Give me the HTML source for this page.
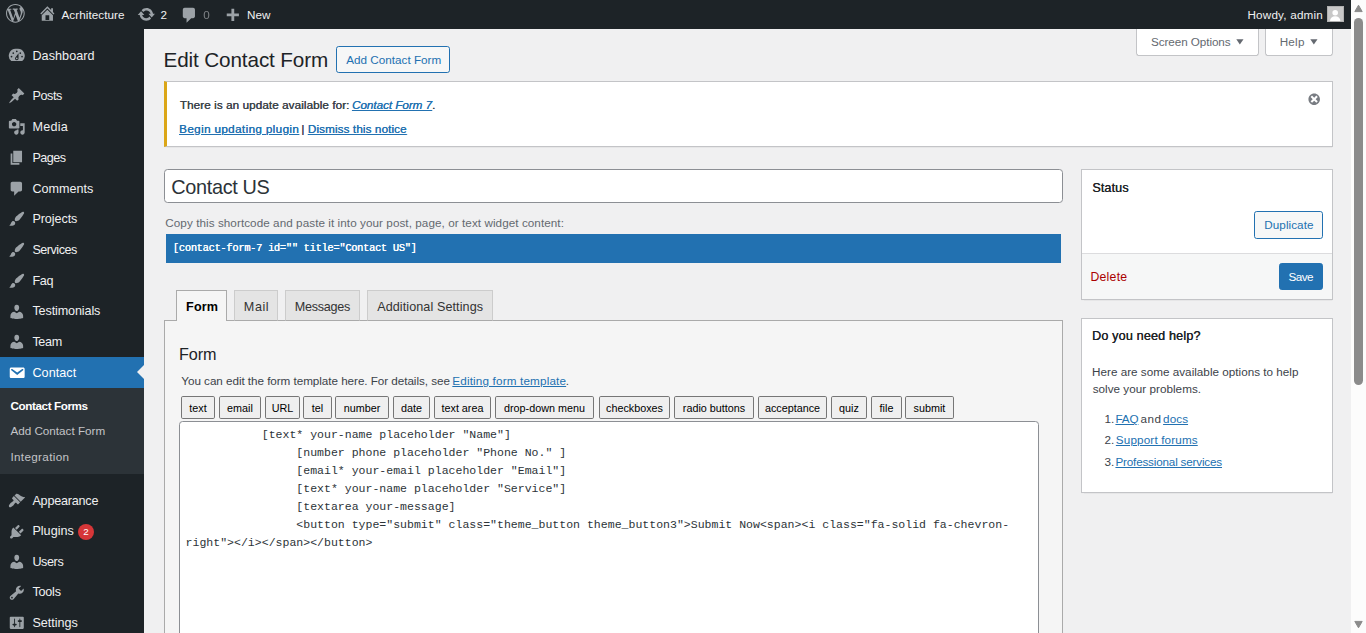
<!DOCTYPE html>
<html lang="en">
<head>
<meta charset="utf-8">
<title>Edit Contact Form ‹ Acrhitecture — WordPress</title>
<style>
*{box-sizing:border-box}
html,body{margin:0;padding:0;width:1366px;height:633px;overflow:hidden;background:#f0f0f1}
body{font-family:"Liberation Sans",Arial,sans-serif;color:#3c434a;position:relative}
#view{position:absolute;left:0;top:0;width:1351px;height:633px;overflow:hidden;background:#f0f0f1}
#z{zoom:0.9;width:1501.12px;height:703.4px;position:relative;font-size:13px;line-height:1.4}
#z>div,#z>svg,#z>pre{position:absolute}
/* scrollbar */
#sb{position:absolute;left:1351px;top:0;width:15px;height:633px;background:#fcfcfc}
#sb .th{position:absolute;left:3px;top:18px;width:9px;height:367px;border-radius:4.5px;background:#8b8b8b}
#sb svg{position:absolute;left:0;display:block;fill:#8b8b8b}
/* admin bar */
#bar{left:0;top:0;width:100%;height:32px;background:#1d2327;color:#f0f0f1;font-size:13px;line-height:32px}
#bar .it{position:absolute;top:.9px;height:32px;white-space:nowrap}
#bar svg{position:absolute;fill:#9ca2a7}
#ava{position:absolute;width:19px;height:18px;border:1px solid #b0b0b0;background:#c8c8c8;overflow:hidden}
#ava svg{position:static;display:block;width:16px;height:16px}
/* menu */
#menuback{left:0;top:32px;width:160px;bottom:0;background:#1d2327}
#menu{position:absolute;left:0;top:32.6px;width:160px;margin:0;padding:12px 0;list-style:none;font-size:14px;line-height:1.3;color:#f0f0f1}
#menu li.top{position:relative;height:34.2px;padding:8px 8px 8px 36px;white-space:nowrap}
#menu li.top svg{position:absolute;left:8.5px;top:7.3px;width:19.5px;height:19.5px;fill:#9ca2a7}
#menu li.sep{height:5px;margin:0 0 6px}
#menu li.top span.nd{position:relative;top:.7px}
#menu li.sep2{height:12.7px}
#menu li.sep2~li.top{height:33.9px}
#menu li.cur{background:#2271b1;color:#fff;margin-top:-.9px;height:35.1px;padding-top:8.9px}
#menu li.cur svg{margin-top:.9px}
#menu li.cur svg{fill:#fff}
#menu li.cur:after{content:"";position:absolute;right:0;top:50%;margin-top:-8px;border:8px solid transparent;border-right-color:#f0f0f1}
#menu ul.sub{list-style:none;margin:0;padding:5.6px 0 5px;background:#2c3338;font-size:13px;line-height:1.4;color:#c3c4c7}
#menu ul.sub li{padding:5px 11.6px;white-space:nowrap}
#menu ul.sub li.on{color:#fff;font-weight:bold}
.badge{display:inline-block;vertical-align:top;margin:.5px 0 -1px .8px;padding:0 5px;min-width:18px;height:18px;border-radius:9px;background:#d63638;color:#fff;font-size:11px;line-height:1.6;text-align:center}
/* text runs */
.tx{white-space:nowrap;line-height:1}
.tx>span{display:inline-block;vertical-align:top}
.f13{font-size:13px;margin-top:-11px}
.f14{font-size:14px;margin-top:-11.85px}
.h1{font-size:23px;margin-top:-19.47px;color:#1d2327}
.h2{font-size:18px;margin-top:-15.24px;color:#1d2327}
.ttl{font-size:22.1px;margin-top:-18.7px;color:#2c3338}
.mono10{font-family:"Liberation Mono",monospace;font-size:11.6px;letter-spacing:-.355px;margin-top:-8.89px;text-shadow:.3px 0 0 currentColor}
.sb{text-shadow:.32px 0 0 currentColor}
.lnk{color:#2271b1}
.lnk span{text-decoration:underline;text-decoration-thickness:1px;text-underline-offset:1.5px}
svg.ab{position:absolute}
/* boxes */
.tg{border:1px solid #c3c4c7;border-top:none;border-radius:0 0 4px 4px;background:#fff}
.pta{border:1px solid #2271b1;border-radius:3px;background:#f6f7f7}
.notice{background:#fff;border:1px solid #c3c4c7;border-left:4px solid #dba617;box-shadow:0 1px 1px rgba(0,0,0,.04)}
.title{background:#fff;border:1px solid #8c8f94;border-radius:4px}
.sc{background:#2271b1}
.panel{background:#f5f5f5;border:1px solid #aaa}
.tab{background:#e4e4e4;border:1px solid #ccc;border-bottom:1px solid #aaa}
.tab.act{background:#f5f5f5;border:1px solid #aaa;border-bottom:none}
.tb{background:#efefef;border:1px solid #767676;border-radius:2px;color:#000;font-size:12px;line-height:25.5px;text-align:center;white-space:nowrap}
.ta{background:#fff;border:1px solid #8c8f94;border-radius:4px}
.code{margin:0;font-family:"Liberation Mono",monospace;font-size:12.83px;line-height:20px;color:#2c3338;white-space:pre}
.pbox{background:#fff;border:1px solid #c3c4c7;box-shadow:0 1px 1px rgba(0,0,0,.04)}
</style>
</head>
<body>
<div id="view"><div id="z">
<div id="menuback"></div>
<div id="bar">
<svg style="left:6.77px;top:4.99px;width:20.8px;height:20.8px" viewBox="0 0 20 20"><path fill-rule="evenodd" d="M20 10c0-5.51-4.49-10-10-10C4.48 0 0 4.49 0 10c0 5.52 4.48 10 10 10 5.51 0 10-4.48 10-10zM7.78 15.37L4.37 6.22c.55-.02 1.17-.08 1.17-.08.5-.06.44-1.13-.06-1.11 0 0-1.45.11-2.37.11-.18 0-.37 0-.58-.01C4.12 2.69 6.87 1.11 10 1.11c2.33 0 4.45.87 6.05 2.34-.68-.11-1.65.39-1.65 1.58 0 .74.45 1.36.9 2.1.35.61.55 1.36.55 2.46 0 1.49-1.4 5-1.4 5l-3.03-8.37c.54-.02.82-.17.82-.17.5-.05.44-1.25-.06-1.22 0 0-1.44.12-2.38.12-.87 0-2.33-.12-2.33-.12-.5-.03-.56 1.2-.06 1.22l.92.08 1.26 3.41zM17.41 10c.24-.64.74-1.87.43-4.25.7 1.29 1.05 2.71 1.05 4.25 0 3.29-1.73 6.24-4.4 7.78.97-2.59 1.94-5.2 2.92-7.78zM6.1 18.09C3.12 16.65 1.11 13.53 1.11 10c0-1.3.23-2.48.72-3.59C3.25 10.3 4.67 14.2 6.1 18.09zm4.03-6.63l2.58 6.98c-.86.29-1.76.45-2.71.45-.79 0-1.57-.11-2.29-.33.81-2.38 1.62-4.74 2.42-7.1z"/></svg>
<svg style="left:41.71px;top:4.90px;width:20.8px;height:20.8px" viewBox="0 0 20 20"><path fill-rule="evenodd" d="M16 8.5l1.53 1.53-1.06 1.06L10 4.62l-6.47 6.47-1.06-1.06L10 2.5l4 4v-2h2v4zm-6-2.46l6 5.99V18H4v-5.970zM12 17v-5H8v5h4z"/></svg>
<div class="it" style="left:68.31px"><span id="t-site" style="letter-spacing:0.068px;">Acrhitecture</span></div>
<svg style="left:152.49px;top:5.16px;width:20.8px;height:20.8px" viewBox="0 0 20 20"><path fill-rule="evenodd" d="M10.2 3.28c3.53 0 6.43 2.61 6.92 6h2.08l-3.5 4-3.5-4h2.32c-.45-1.97-2.21-3.45-4.32-3.45-1.45 0-2.73.71-3.54 1.78L4.95 5.66C6.23 4.2 8.11 3.28 10.2 3.28zm-.4 13.44c-3.52 0-6.43-2.61-6.92-6H.8l3.500-4c1.170 1.330 2.330 2.670 3.500 4H5.480c.45 1.97 2.21 3.45 4.32 3.45 1.45 0 2.73-.71 3.54-1.78l1.71 1.95c-1.28 1.46-3.15 2.38-5.25 2.38z"/></svg>
<div class="it" style="left:178.22px"><span id="t-upd">2</span></div>
<svg style="left:200.29px;top:6.21px;width:20.8px;height:20.8px" viewBox="0 0 20 20"><path fill-rule="evenodd" d="M5 2h9c1.1 0 2 .9 2 2v7c0 1.1-.9 2-2 2h-2l-5 5v-5H5c-1.1 0-2-.9-2-2V4c0-1.1.9-2 2-2z"/></svg>
<div class="it" style="left:225.89px;color:#a7aaad;opacity:.7"><span id="t-cmt">0</span></div>
<svg style="left:248.30px;top:7.66px;width:20.8px;height:20.8px" viewBox="0 0 20 20"><path fill-rule="evenodd" d="M17 7v3h-5v5H9v-5H4V7h5V2h3v5h5z"/></svg>
<div class="it" style="left:274.49px"><span id="t-new" style="letter-spacing:0.021px;">New</span></div>
<div class="it" style="left:1386.04px"><span id="t-howdy" style="letter-spacing:0.225px;">Howdy, admin</span></div>
<div id="ava" style="left:1474.67px;top:6.89px"><svg viewBox="0 0 16 16"><circle cx="8" cy="6.3" r="3.1" fill="#fff"/><path fill="#fff" d="M2.2 16c0-3.6 2.4-5.6 5.8-5.6s5.800 2 5.800 5.600z"/></svg></div>
</div>
<ul id="menu">
<li class="top"><svg viewBox="0 0 20 20"><path fill-rule="evenodd" d="M3.76 16h12.48A7.998 7.998 0 0010 2a7.998 7.998 0 00-6.24 14zM10 4c.55 0 1 .45 1 1s-.45 1-1 1-1-.45-1-1 .45-1 1-1zM6 6c.55 0 1 .45 1 1s-.45 1-1 1-1-.45-1-1 .45-1 1-1zm8 0c.55 0 1 .45 1 1s-.45 1-1 1-1-.45-1-1 .45-1 1-1zm-5.370 5.550L12 7v6c0 1.100-.9 2-2 2s-2-.9-2-2c0-.57.24-1.08.63-1.45zM4 10c.55 0 1 .45 1 1s-.45 1-1 1-1-.45-1-1 .45-1 1-1zm12 0c.55 0 1 .45 1 1s-.45 1-1 1-1-.45-1-1 .45-1 1-1zm-5 3c0-.55-.45-1-1-1s-1 .45-1 1 .45 1 1 1 1-.45 1-1z"/></svg><span id="t-m-dash" class="nd" style="letter-spacing:0.085px;">Dashboard</span></li>
<li class="sep"></li>
<li class="top"><svg viewBox="0 0 20 20"><path fill-rule="evenodd" d="M10.44 3.02l1.82-1.82 6.36 6.35-1.83 1.82c-1.05-.68-2.48-.57-3.41.36l-.75.75c-.92.93-1.04 2.35-.35 3.41l-1.83 1.82-2.41-2.41-2.8 2.79c-.42.42-3.38 2.71-3.8 2.29s1.86-3.39 2.28-3.81l2.79-2.79L4.1 9.36l1.83-1.82c1.05.69 2.48.57 3.4-.36l.75-.75c.93-.92 1.05-2.35.36-3.41z"/></svg><span id="t-m-posts" style="letter-spacing:-0.421px;">Posts</span></li>
<li class="top"><svg viewBox="0 0 20 20"><path fill-rule="evenodd" d="M13 11V4c0-.55-.45-1-1-1h-1.67L9 1H5L3.67 3H2c-.55 0-1 .45-1 1v7c0 .55.45 1 1 1h10c.55 0 1-.45 1-1zM7 4.5c1.38 0 2.5 1.12 2.5 2.5S8.38 9.5 7 9.5 4.5 8.38 4.5 7 5.62 4.5 7 4.5zM14 6h5v10.500c0 1.38-1.12 2.5-2.5 2.5S14 17.880 14 16.500s1.120-2.500 2.500-2.500c.17 0 .34.02.5.05V9h-3V6zm-4 8.050V13h2v3.500c0 1.380-1.120 2.500-2.500 2.500S7 17.880 7 16.500 8.120 14 9.500 14c.17 0 .34.02.5.05z"/></svg><span id="t-m-media" style="letter-spacing:0.283px;">Media</span></li>
<li class="top"><svg viewBox="0 0 20 20"><path fill-rule="evenodd" d="M6 15V2h10v13H6zm-1 1h8v2H3V5h2v11z"/></svg><span id="t-m-pages" style="letter-spacing:-0.565px;">Pages</span></li>
<li class="top"><svg viewBox="0 0 20 20"><path fill-rule="evenodd" d="M5 2h9c1.1 0 2 .9 2 2v7c0 1.1-.9 2-2 2h-2l-5 5v-5H5c-1.1 0-2-.9-2-2V4c0-1.1.9-2 2-2z"/></svg><span id="t-m-comments" class="nd" style="letter-spacing:0.016px;">Comments</span></li>
<li class="top"><svg viewBox="0 0 20 20"><path fill-rule="evenodd" d="M18.33 3.57s.27-.8-.31-1.36c-.53-.52-1.22-.24-1.22-.24-.61.3-5.76 3.47-7.67 5.57-.86.96-2.06 3.79-1.09 4.82.92.98 3.96-.17 4.79-1 2.06-2.06 5.21-7.17 5.5-7.79zM1.400 17.650c2.370-1.560 1.460-3.410 3.230-4.640.93-.65 2.22-.62 3.08.29.63.67.8 2.57-.16 3.46-1.57 1.45-4 1.55-6.150.89z"/></svg><span id="t-m-projects" style="letter-spacing:-0.082px;">Projects</span></li>
<li class="top"><svg viewBox="0 0 20 20"><path fill-rule="evenodd" d="M18.33 3.57s.27-.8-.31-1.36c-.53-.52-1.22-.24-1.22-.24-.61.3-5.76 3.47-7.67 5.57-.86.96-2.06 3.79-1.09 4.82.92.98 3.96-.17 4.79-1 2.06-2.06 5.21-7.17 5.5-7.79zM1.400 17.650c2.370-1.560 1.460-3.410 3.230-4.640.93-.65 2.22-.62 3.08.29.63.67.8 2.57-.16 3.46-1.57 1.45-4 1.55-6.150.89z"/></svg><span id="t-m-services" style="letter-spacing:-0.536px;">Services</span></li>
<li class="top"><svg viewBox="0 0 20 20"><path fill-rule="evenodd" d="M18.33 3.57s.27-.8-.31-1.36c-.53-.52-1.22-.24-1.22-.24-.61.3-5.76 3.47-7.67 5.57-.86.96-2.06 3.79-1.09 4.82.92.98 3.96-.17 4.79-1 2.06-2.06 5.21-7.17 5.5-7.79zM1.400 17.650c2.370-1.560 1.460-3.410 3.230-4.640.93-.65 2.22-.62 3.08.29.63.67.8 2.57-.16 3.46-1.57 1.45-4 1.55-6.150.89z"/></svg><span id="t-m-faq" style="letter-spacing:-0.314px;">Faq</span></li>
<li class="top"><svg viewBox="0 0 20 20"><path fill-rule="evenodd" d="M10 9.25c-2.27 0-2.73-3.44-2.73-3.44C7 4.02 7.82 2 9.97 2c2.16 0 2.98 2.02 2.71 3.81 0 0-.41 3.44-2.68 3.44zm0 2.57L12.720 10c2.390 0 4.520 2.330 4.520 4.530v2.490s-3.650 1.130-7.240 1.130c-3.650 0-7.240-1.130-7.240-1.130v-2.490c0-2.250 1.940-4.480 4.470-4.480z"/></svg><span id="t-m-testi" style="letter-spacing:-0.128px;">Testimonials</span></li>
<li class="top"><svg viewBox="0 0 20 20"><path fill-rule="evenodd" d="M10 9.25c-2.27 0-2.73-3.44-2.73-3.44C7 4.02 7.82 2 9.97 2c2.16 0 2.98 2.02 2.71 3.81 0 0-.41 3.44-2.68 3.44zm0 2.57L12.720 10c2.390 0 4.520 2.330 4.520 4.530v2.490s-3.650 1.130-7.240 1.130c-3.650 0-7.240-1.130-7.240-1.130v-2.490c0-2.250 1.940-4.480 4.470-4.480z"/></svg><span id="t-m-team" style="letter-spacing:-0.365px;">Team</span></li>
<li class="top cur"><svg viewBox="0 0 20 20"><path fill-rule="evenodd" d="M3.87 4h13.25C18.37 4 19 4.59 19 5.79v8.42c0 1.19-.63 1.79-1.88 1.79H3.87c-1.25 0-1.88-.6-1.88-1.790V5.790c0-1.200.630-1.790 1.880-1.790zm6.620 8.600l6.740-5.530c.24-.2.43-.66.13-1.07-.29-.41-.82-.42-1.17-.17l-5.700 3.860L4.800 5.830c-.35-.25-.88-.24-1.17.17-.3.41-.11.87.13 1.070l6.730 5.530z"/></svg><span id="t-m-contact" style="letter-spacing:0.078px;">Contact</span></li>
<li><ul class="sub"><li class="on"><span id="t-s1" style="letter-spacing:-0.448px;">Contact Forms</span></li><li><span id="t-s2" style="letter-spacing:-0.012px;">Add Contact Form</span></li><li><span id="t-s3" style="letter-spacing:0.367px;">Integration</span></li></ul></li>
<li class="sep2"></li>
<li class="top"><svg viewBox="0 0 20 20"><path fill-rule="evenodd" d="M14.48 11.060L7.410 3.990l1.500-1.500c.5-.56 2.300-.47 3.510.32 1.210.8 1.430 1.280 2.910 2.100 1.180.64 2.450 1.260 4.450.85zm-.71.71L6.700 4.700 4.930 6.470c-.39.39-.39 1.020 0 1.410l1.060 1.060c.39.39.39 1.030 0 1.420-.6.6-1.430 1.110-2.210 1.690-.35.26-.7.53-1.010.84C1.430 14.230.4 16.080 1.400 17.070c.99 1 2.840-.03 4.180-1.360.31-.31.58-.66.85-1.020.57-.78 1.080-1.610 1.690-2.210.39-.39 1.020-.39 1.410 0l1.060 1.060c.39.39 1.020.39 1.410 0z"/></svg><span id="t-m-appear" style="letter-spacing:-0.228px;">Appearance</span></li>
<li class="top"><svg viewBox="0 0 20 20"><path fill-rule="evenodd" d="M13.11 4.360L9.870 7.600 8 5.730l3.240-3.240c.35-.34 1.050-.2 1.560.32.52.51.66 1.210.31 1.550zm-8 1.770l.91-1.120 9.010 9.010-1.190.84c-.71.71-2.630 1.160-3.820 1.160H6.140L4.900 17.260c-.59.59-1.540.59-2.120 0-.59-.58-.59-1.530 0-2.120l1.240-1.240v-3.880c0-1.130.4-3.190 1.090-3.890zm7.260 3.970l3.240-3.240c.34-.35 1.040-.21 1.550.31.52.51.66 1.210.31 1.550l-3.240 3.250z"/></svg><span id="t-m-plugins" style="letter-spacing:0.013px;">Plugins</span> <span class="badge">2</span></li>
<li class="top"><svg viewBox="0 0 20 20"><path fill-rule="evenodd" d="M10 9.25c-2.27 0-2.73-3.44-2.73-3.44C7 4.02 7.82 2 9.97 2c2.16 0 2.98 2.02 2.71 3.81 0 0-.41 3.44-2.68 3.44zm0 2.57L12.720 10c2.390 0 4.520 2.330 4.520 4.530v2.490s-3.650 1.130-7.240 1.130c-3.650 0-7.240-1.130-7.240-1.130v-2.490c0-2.250 1.940-4.480 4.470-4.480z"/></svg><span id="t-m-users" style="letter-spacing:-0.435px;">Users</span></li>
<li class="top"><svg viewBox="0 0 20 20"><path fill-rule="evenodd" d="M16.68 9.770c-1.340 1.340-3.300 1.670-4.950.99l-5.410 6.520c-.99.99-2.590.99-3.580 0s-.99-2.590 0-3.570l6.520-5.420c-.68-1.650-.35-3.610.99-4.950 1.280-1.280 3.120-1.620 4.720-1.060l-2.890 2.890 2.820 2.820 2.860-2.870c.53 1.580.18 3.390-1.080 4.650zM3.810 16.210c.4.39 1.040.39 1.430 0 .4-.4.4-1.040 0-1.430-.39-.4-1.030-.4-1.430 0-.39.39-.39 1.030 0 1.430z"/></svg><span id="t-m-tools" style="letter-spacing:-0.214px;">Tools</span></li>
<li class="top"><svg viewBox="0 0 20 20"><path fill-rule="evenodd" d="M18 16V4c0-.55-.45-1-1-1H3c-.55 0-1 .45-1 1v12c0 .55.45 1 1 1h14c.55 0 1-.45 1-1zM8 11h1c.55 0 1 .45 1 1s-.45 1-1 1H8v1.500c0 .28-.22.5-.5.5s-.5-.22-.5-.5V13H6c-.55 0-1-.45-1-1s.45-1 1-1h1V5.500c0-.28.22-.5.5-.5s.5.22.5.5V11zm5-2h-1c-.55 0-1-.45-1-1s.45-1 1-1h1V5.500c0-.28.22-.5.5-.5s.5.220.5.500V7h1c.55 0 1 .45 1 1s-.45 1-1 1h-1v5.500c0 .28-.22.5-.5.5s-.5-.22-.5-.5V9z"/></svg><span id="t-m-settings" style="letter-spacing:-0.031px;">Settings</span></li>
</ul>
<div class="tg" style="left:1262.22px;top:32.22px;width:136.67px;height:30.00px;"></div>
<div class="tx f13" style="left:1278.97px;top:50.67px;color:#646970"><span id="t-so" style="letter-spacing:-0.087px;">Screen Options</span></div>
<svg class="ab" style="left:1367.00px;top:35.56px;width:20px;height:20px;fill:#646970" viewBox="0 0 20 20"><path fill-rule="evenodd" d="M15 8l-4.030 6L7 8h8z"/></svg>
<div class="tg" style="left:1405.56px;top:32.22px;width:75.56px;height:30.00px;"></div>
<div class="tx f13" style="left:1421.82px;top:50.67px;color:#646970"><span id="t-help" style="letter-spacing:0.297px;">Help</span></div>
<svg class="ab" style="left:1448.56px;top:35.56px;width:20px;height:20px;fill:#646970" viewBox="0 0 20 20"><path fill-rule="evenodd" d="M15 8l-4.030 6L7 8h8z"/></svg>
<div class="tx h1" style="left:181.67px;top:75.44px;"><span id="t-h1" style="letter-spacing:-0.136px;">Edit Contact Form</span></div>
<div class="pta" style="left:373.33px;top:51.11px;width:126.67px;height:30.00px;"></div>
<div class="tx f13" style="left:384.75px;top:70.89px;color:#2271b1"><span id="t-pta" style="letter-spacing:0.010px;">Add Contact Form</span></div>
<div class="notice" style="left:182.22px;top:90.00px;width:1298.89px;height:73.33px;"></div>
<div class="tx f13 sb" style="left:199.71px;top:121.44px;"><span id="t-n1" style="letter-spacing:0.091px;">There is an update available for:</span></div>
<div class="tx f13 sb lnk" style="left:391.06px;top:121.44px;font-style:italic"><span id="t-n2" style="letter-spacing:-0.049px;">Contact Form 7</span></div>
<div class="tx f13 sb" style="left:480.00px;top:121.44px;"><span id="t-n3">.</span></div>
<div class="tx f13 sb lnk" style="left:198.93px;top:147.22px;"><span id="t-n4" style="letter-spacing:0.404px;">Begin updating plugin</span></div>
<div class="tx f13 sb" style="left:334.67px;top:147.22px;"><span id="t-n5">|</span></div>
<div class="tx f13 sb lnk" style="left:342.04px;top:147.22px;"><span id="t-n6" style="letter-spacing:0.117px;">Dismiss this notice</span></div>
<svg class="ab" style="left:1451.89px;top:102.00px;width:16px;height:16px;fill:#787c82" viewBox="0 0 20 20"><path fill-rule="evenodd" d="M10 2c4.42 0 8 3.58 8 8s-3.58 8-8 8-8-3.58-8-8 3.58-8 8-8zm5 11l-3-3 3-3-2-2-3 3-3-3-2 2 3 3-3 3 2 2 3-3 3 3z"/></svg>
<div class="title" style="left:182.22px;top:187.78px;width:998.89px;height:37.78px;"></div>
<div class="tx ttl" style="left:190.32px;top:216.33px;"><span id="t-title" style="letter-spacing:-0.374px;">Contact US</span></div>
<div class="tx f13" style="left:183.67px;top:252.22px;color:#646970"><span id="t-copy" style="letter-spacing:0.071px;">Copy this shortcode and paste it into your post, page, or text widget content:</span></div>
<div class="sc" style="left:184.44px;top:260.00px;width:994.44px;height:32.22px;"></div>
<div class="tx mono10" style="left:192.00px;top:279.11px;color:#fff"><span id="t-sc">[contact-form-7 id=&quot;&quot; title=&quot;Contact US&quot;]</span></div>
<div class="panel" style="left:182.22px;top:355.56px;width:998.89px;height:422.22px;"></div>
<div class="tab" style="left:260.00px;top:322.22px;width:48.89px;height:34.44px;"></div>
<div class="tab" style="left:316.67px;top:322.22px;width:83.33px;height:34.44px;"></div>
<div class="tab" style="left:407.78px;top:322.22px;width:140.00px;height:34.44px;"></div>
<div class="tab act" style="left:195.56px;top:322.22px;width:56.67px;height:34.44px;"></div>
<div class="tx f14" style="left:206.73px;top:346.11px;font-weight:bold;color:#000"><span id="t-tb1" style="letter-spacing:0.162px;">Form</span></div>
<div class="tx f14" style="left:270.96px;top:346.11px;color:#333"><span id="t-tb2" style="letter-spacing:0.622px;">Mail</span></div>
<div class="tx f14" style="left:327.52px;top:346.11px;color:#333"><span id="t-tb3" style="letter-spacing:-0.305px;">Messages</span></div>
<div class="tx f14" style="left:419.08px;top:346.11px;color:#333"><span id="t-tb4" style="letter-spacing:0.095px;">Additional Settings</span></div>
<div class="tx h2" style="left:198.86px;top:399.56px;"><span id="t-h2" style="letter-spacing:-0.101px;">Form</span></div>
<div class="tx f13" style="left:201.49px;top:427.89px;"><span id="t-you" style="letter-spacing:-0.055px;">You can edit the form template here. For details, see</span></div>
<div class="tx f13 lnk" style="left:502.60px;top:427.89px;"><span id="t-edit" style="letter-spacing:0.179px;">Editing form template</span></div>
<div class="tx f13" style="left:628.56px;top:427.89px;"><span id="t-dot">.</span></div>
<div class="tb" style="left:201.11px;top:440.00px;width:37.78px;height:25.56px;"><span id="t-b0">text</span></div>
<div class="tb" style="left:243.33px;top:440.00px;width:46.67px;height:25.56px;"><span id="t-b1">email</span></div>
<div class="tb" style="left:294.44px;top:440.00px;width:38.89px;height:25.56px;"><span id="t-b2">URL</span></div>
<div class="tb" style="left:336.67px;top:440.00px;width:32.22px;height:25.56px;"><span id="t-b3">tel</span></div>
<div class="tb" style="left:372.22px;top:440.00px;width:60.00px;height:25.56px;"><span id="t-b4">number</span></div>
<div class="tb" style="left:436.67px;top:440.00px;width:41.11px;height:25.56px;"><span id="t-b5">date</span></div>
<div class="tb" style="left:482.22px;top:440.00px;width:63.33px;height:25.56px;"><span id="t-b6">text area</span></div>
<div class="tb" style="left:550.00px;top:440.00px;width:110.00px;height:25.56px;"><span id="t-b7">drop-down menu</span></div>
<div class="tb" style="left:665.56px;top:440.00px;width:78.89px;height:25.56px;"><span id="t-b8">checkboxes</span></div>
<div class="tb" style="left:748.89px;top:440.00px;width:88.89px;height:25.56px;"><span id="t-b9">radio buttons</span></div>
<div class="tb" style="left:842.22px;top:440.00px;width:76.67px;height:25.56px;"><span id="t-b10">acceptance</span></div>
<div class="tb" style="left:923.33px;top:440.00px;width:40.00px;height:25.56px;"><span id="t-b11">quiz</span></div>
<div class="tb" style="left:967.78px;top:440.00px;width:34.44px;height:25.56px;"><span id="t-b12">file</span></div>
<div class="tb" style="left:1005.56px;top:440.00px;width:54.44px;height:25.56px;"><span id="t-b13">submit</span></div>
<div class="ta" style="left:198.89px;top:467.78px;width:955.56px;height:310.00px;"></div>
<pre class="code" style="left:206.22px;top:473.00px">           [text* your-name placeholder &quot;Name&quot;]
                [number phone placeholder &quot;Phone No.&quot; ]
                [email* your-email placeholder &quot;Email&quot;]
                [text* your-name placeholder &quot;Service&quot;]
                [textarea your-message]
                &lt;button type=&quot;submit&quot; class=&quot;theme_button theme_button3&quot;&gt;Submit Now&lt;span&gt;&lt;i class=&quot;fa-solid fa-chevron-
right&quot;&gt;&lt;/i&gt;&lt;/span&gt;&lt;/button&gt;</pre>
<div class="pbox" style="left:1201.11px;top:187.78px;width:280.00px;height:145.56px;"></div>
<div style="left:1202.22px;top:281.11px;width:277.78px;height:51.11px;position:absolute;background:#f6f7f7;border-top:1px solid #dcdcde"></div>
<div class="tx f14 sb" style="left:1213.59px;top:213.78px;color:#1d2327"><span id="t-status" style="letter-spacing:0.116px;">Status</span></div>
<div class="pta" style="left:1393.33px;top:234.44px;width:76.67px;height:31.11px;"></div>
<div class="tx f13" style="left:1404.71px;top:254.22px;color:#2271b1"><span id="t-dup" style="letter-spacing:0.075px;">Duplicate</span></div>
<div class="tx f13" style="left:1211.55px;top:312.22px;margin-top:-11.51px;color:#a00"><span id="t-del" style="font-size:13.6px;letter-spacing:0.304px;">Delete</span></div>
<div class="pta" style="left:1421.11px;top:292.22px;width:48.89px;height:30.00px;background:#2271b1;border-color:#2271b1"></div>
<div class="tx f13" style="left:1431.63px;top:312.22px;color:#fff"><span id="t-save" style="letter-spacing:-0.590px;">Save</span></div>
<div class="pbox" style="left:1201.11px;top:353.33px;width:280.00px;height:194.44px;"></div>
<div class="tx f14 sb" style="left:1213.30px;top:378.56px;color:#1d2327"><span id="t-dy" style="letter-spacing:0.184px;">Do you need help?</span></div>
<div class="tx f13" style="left:1213.38px;top:417.89px;"><span id="t-h1a" style="letter-spacing:0.014px;">Here are some available options to help</span></div>
<div class="tx f13" style="left:1214.08px;top:436.44px;"><span id="t-h1b" style="letter-spacing:0.031px;">solve your problems.</span></div>
<div class="tx f13" style="left:1227.11px;top:470.11px;"><span id="t-l1">1.</span></div>
<div class="tx f13 lnk" style="left:1239.38px;top:470.11px;"><span id="t-faq" style="letter-spacing:-0.152px;">FAQ</span></div>
<div class="tx f13" style="left:1267.23px;top:470.11px;"><span id="t-and" style="letter-spacing:0.574px;">and</span></div>
<div class="tx f13 lnk" style="left:1292.34px;top:470.11px;"><span id="t-docs" style="letter-spacing:0.077px;">docs</span></div>
<div class="tx f13" style="left:1227.11px;top:493.11px;"><span id="t-l2">2.</span></div>
<div class="tx f13 lnk" style="left:1239.85px;top:493.11px;"><span id="t-sf" style="letter-spacing:0.157px;">Support forums</span></div>
<div class="tx f13" style="left:1227.11px;top:517.78px;"><span id="t-l3">3.</span></div>
<div class="tx f13 lnk" style="left:1239.38px;top:517.78px;"><span id="t-ps" style="letter-spacing:-0.204px;">Professional services</span></div>
</div></div>
<div id="sb">
<svg style="top:0" width="15" height="17" viewBox="0 0 15 17"><path d="M3.800 11.600 7.500 5.200 11.200 11.600z" stroke="#8b8b8b" stroke-width="1" stroke-linejoin="round"/></svg>
<div class="th"></div>
<svg style="top:616px" width="15" height="17" viewBox="0 0 15 17"><path d="M3.800 5.400 7.500 11.800 11.200 5.400z" stroke="#8b8b8b" stroke-width="1" stroke-linejoin="round"/></svg>
</div>
</body>
</html>
